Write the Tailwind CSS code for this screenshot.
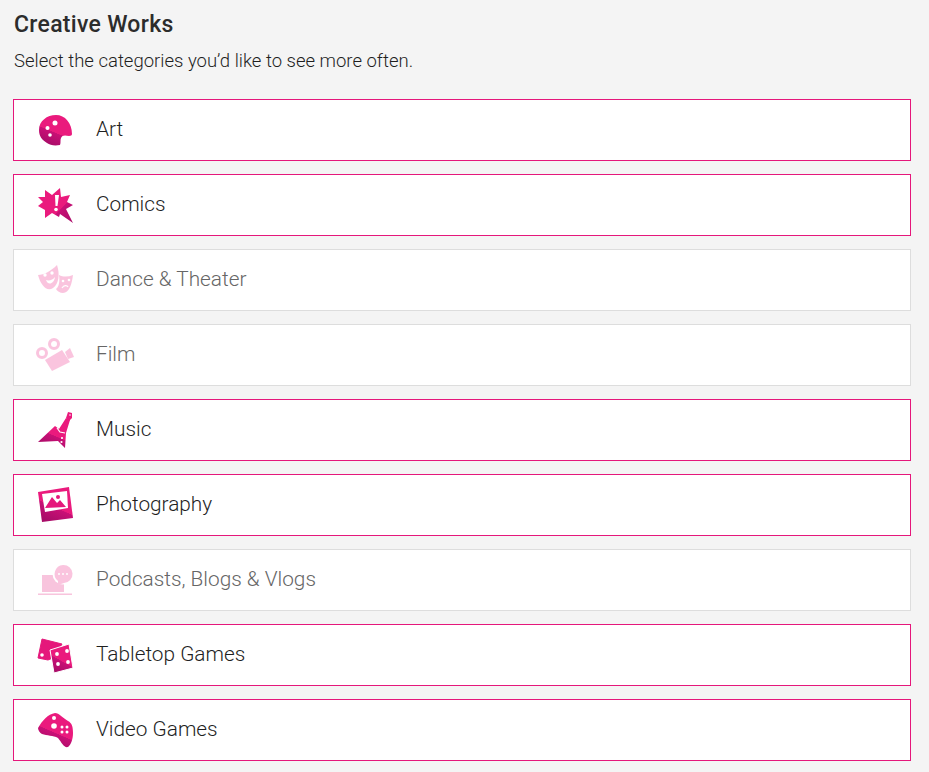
<!DOCTYPE html>
<html lang="en">
<head>
  <meta charset="UTF-8">
  <meta name="viewport" content="width=device-width, initial-scale=1.0">
  <title>Creative Works</title>
  <script src="https://cdn.jsdelivr.net/npm/@tailwindcss/browser@4"></script>
</head>
<body class="bg-[#f4f4f4] font-['Roboto',sans-serif] text-[#1f1f1f] h-[772px] overflow-hidden">
  <svg width="0" height="0" class="absolute">
    <defs>
      <linearGradient id="g" x1="0.75" y1="0.1" x2="0.35" y2="1">
        <stop offset="0" stop-color="#ea1a7d"/>
        <stop offset="0.55" stop-color="#ea1a7d"/>
        <stop offset="0.56" stop-color="#c91076"/>
        <stop offset="1" stop-color="#a80c68"/>
      </linearGradient>
      <linearGradient id="g2" x1="0" y1="0" x2="1" y2="1">
        <stop offset="0" stop-color="#ea1a7d"/>
        <stop offset="0.62" stop-color="#ea1a7d"/>
        <stop offset="0.63" stop-color="#c91076"/>
        <stop offset="1" stop-color="#a80c68"/>
      </linearGradient>
    </defs>
  </svg>

  <div class="pl-[13px] pt-[11px]">
    <h1 class="pl-px text-[23px] leading-[28px] font-medium tracking-[0.3px] text-[#2c2c2c]">Creative Works</h1>
    <p class="pl-px mt-[10px] text-[18.5px] leading-[24px] font-light">Select the categories you’d like to see more often.</p>

    <div class="mt-[26px] w-[898px] flex flex-col gap-[13px]">

      <!-- Art -->
      <div class="h-[62px] flex items-center gap-[21px] pl-[21px] bg-white border border-[#e5177b]">
        <svg class="w-10 h-10" viewBox="0 0 40 40">
          <path fill="url(#g)" d="M4 20C4 11 12 5 21 5C30 5 37 13 37 24C37 25 36 26 34 26C30 25 27 25 26 28C25 30 26 33 25 35C19 36 15 35 12 33C7 30 4 26 4 20Z"/>
          <circle cx="20" cy="13" r="2.500" fill="#fff"/><circle cx="12.500" cy="18" r="2" fill="#fff"/><circle cx="15" cy="25" r="1.800" fill="#fff"/>
        </svg>
        <span class="text-[20.8px] font-light">Art</span>
      </div>

      <!-- Comics -->
      <div class="h-[62px] flex items-center gap-[21px] pl-[21px] bg-white border border-[#e5177b]">
        <svg class="w-10 h-10" viewBox="0 0 40 40">
          <path fill="url(#g2)" d="M10 5L17 10L25 3L26 12L35 10L32 17L38 20L31 24L38 38L25 29L24 32L17 28L10 33L10 25L3 21L8 17L3 12L10 12Z"/>
          <path fill="#fff" d="M20 10L24 10L22.500 21L20.500 21Z"/><circle cx="21" cy="24.500" r="1.800" fill="#fff"/>
        </svg>
        <span class="text-[20.8px] font-light">Comics</span>
      </div>

      <!-- Dance & Theater -->
      <div class="h-[62px] flex items-center gap-[21px] pl-[21px] bg-white border border-[#ddd]">
        <svg class="w-10 h-10 opacity-25" viewBox="0 0 40 40">
          <path fill="#ee1a80" d="M3 15C9 15 16 11 22 5C25 14 24 24 18 28C12 32 6 26 3 15Z"/>
          <path fill="#ee1a80" d="M24 15C28 17 33 17 38 15C37 24 34 33 28 33C25 33 22 31 21 29C24 27 25 21 24 15Z"/>
          <circle cx="10" cy="15" r="1.700" fill="#fff"/><circle cx="17" cy="13" r="1.700" fill="#fff"/>
          <path fill="#fff" d="M11 20C14 21 18 20 20 17C19 24 13 26 11 20Z"/>
          <circle cx="28" cy="21" r="1.300" fill="#fff"/><circle cx="34" cy="20" r="1.300" fill="#fff"/>
          <path fill="none" stroke="#fff" stroke-width="1.300" d="M27 28C29 25 32 25 33 27"/>
        </svg>
        <span class="text-[20.8px] font-light text-[#666]">Dance &amp; Theater</span>
      </div>

      <!-- Film -->
      <div class="h-[62px] flex items-center gap-[21px] pl-[21px] bg-white border border-[#ddd]">
        <svg class="w-10 h-10 opacity-25" viewBox="0 0 40 40">
          <circle cx="19" cy="9" r="4.500" fill="none" stroke="#ee1a80" stroke-width="3"/>
          <circle cx="7" cy="18" r="4.500" fill="none" stroke="#ee1a80" stroke-width="3"/>
          <path fill="#ee1a80" d="M10 25L27 15L35 27L17 36Z"/>
          <path fill="#ee1a80" d="M30 17L35 13L39 22L33 24Z"/>
        </svg>
        <span class="text-[20.8px] font-light text-[#666]">Film</span>
      </div>

      <!-- Music -->
      <div class="h-[62px] flex items-center gap-[21px] pl-[21px] bg-white border border-[#e5177b]">
        <svg class="w-10 h-10" viewBox="0 0 40 40">
          <path fill="url(#g)" d="M3 32L20 16L24 19L31 8L35 10L31 23L30 38L23 31Z"/>
          <path fill="#ea1a7d" d="M31 8L33 2L37 3L37 8L34 11Z"/>
          <path fill="none" stroke="#fff" stroke-width="1.200" d="M22 18L25 22L30 23"/>
          <circle cx="35" cy="5" r="0.800" fill="#fff"/>
          <circle cx="27" cy="28" r="1.100" fill="#fff"/><circle cx="26.500" cy="32" r="1.100" fill="#fff"/>
        </svg>
        <span class="text-[20.8px] font-light">Music</span>
      </div>

      <!-- Photography -->
      <div class="h-[62px] flex items-center gap-[21px] pl-[21px] bg-white border border-[#e5177b]">
        <svg class="w-10 h-10" viewBox="0 0 40 40">
          <path fill="url(#g)" d="M3 7L34 2L38 33L7 37Z"/>
          <path fill="#fff" d="M7 9L32 6L33 23L10 27Z"/>
          <path fill="#e5177b" d="M10 23L17 12L22 18L25 15L31 22Z"/>
          <circle cx="23" cy="12" r="2" fill="#e5177b"/>
        </svg>
        <span class="text-[20.8px] font-light">Photography</span>
      </div>

      <!-- Podcasts -->
      <div class="h-[62px] flex items-center gap-[21px] pl-[21px] bg-white border border-[#ddd]">
        <svg class="w-10 h-10 opacity-25" viewBox="0 0 40 40">
          <rect x="7" y="15" width="22" height="17" fill="#e5177b"/>
          <rect x="3" y="33.500" width="34" height="1.500" fill="#e5177b"/>
          <circle cx="28" cy="14" r="10.500" fill="#fff"/>
          <path fill="#ee1a80" d="M28 5A9 9 0 1 1 29 23L23 25L23 21A9 9 0 0 1 28 5Z"/>
          <circle cx="24" cy="14" r="1" fill="#fff"/><circle cx="28" cy="14" r="1" fill="#fff"/><circle cx="32" cy="14" r="1" fill="#fff"/>
        </svg>
        <span class="text-[20.8px] font-light text-[#666]">Podcasts, Blogs &amp; Vlogs</span>
      </div>

      <!-- Tabletop Games -->
      <div class="h-[62px] flex items-center gap-[21px] pl-[21px] bg-white border border-[#e5177b]">
        <svg class="w-10 h-10" viewBox="0 0 40 40">
          <path fill="#e5177b" stroke="#e5177b" stroke-linejoin="round" d="M7 4L27 9L20 22L13 25L3 23Z"/>
          <circle cx="7" cy="20" r="1.800" fill="#fff"/>
          <path fill="url(#g)" stroke="#fff" stroke-linejoin="round" d="M15 15L34 9L38 33L19 38Z"/>
          <circle cx="22" cy="19" r="1.900" fill="#fff"/><circle cx="32" cy="16" r="1.900" fill="#fff"/>
          <circle cx="23" cy="29" r="1.900" fill="#fff"/><circle cx="33" cy="27" r="1.900" fill="#fff"/>
        </svg>
        <span class="text-[20.8px] font-light">Tabletop Games</span>
      </div>

      <!-- Video Games -->
      <div class="h-[62px] flex items-center gap-[21px] pl-[21px] bg-white border border-[#e5177b]">
        <svg class="w-10 h-10" viewBox="0 0 40 40">
          <path fill="url(#g)" d="M3 18C7 11 13 4 20 3C24 3 28 8 33 11C37 13 38 17 38 23C38 29 36 35 33 37C29 38 27 33 23 28C18 25 12 26 7 24C5 23 3 20 3 18Z"/>
          <circle cx="19" cy="8" r="2" fill="#fff"/><circle cx="19" cy="16" r="2.800" fill="#fff"/>
          <circle cx="27" cy="17" r="1.500" fill="#fff"/><circle cx="32" cy="17" r="1.500" fill="#fff"/>
          <circle cx="27" cy="22" r="1.500" fill="#fff"/><circle cx="32" cy="22" r="1.500" fill="#fff"/>
        </svg>
        <span class="text-[20.8px] font-light">Video Games</span>
      </div>

    </div>
  </div>
</body>
</html>
